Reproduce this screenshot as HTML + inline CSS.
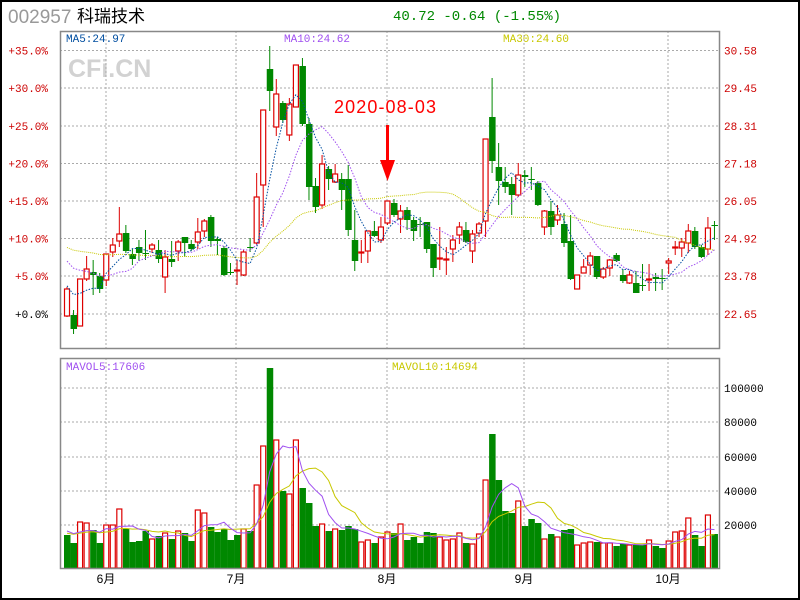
<!DOCTYPE html>
<html><head><meta charset="utf-8"><style>
html,body{margin:0;padding:0;background:#fff;}
#w{position:relative;width:796px;height:596px;border:2px solid #000;overflow:hidden;background:#fff;}
svg{position:absolute;left:-2px;top:-2px;}
</style></head><body><div id="w">
<svg id="s" width="800" height="600" xmlns="http://www.w3.org/2000/svg" font-family="Liberation Mono, monospace">
<text x="8" y="23" font-family="Liberation Sans, sans-serif" font-size="19" fill="#999">002957</text>
<text x="77" y="22" font-family="Liberation Sans, 'Noto Sans CJK SC', sans-serif" font-size="17" fill="#000">科瑞技术</text>
<text x="393" y="20" font-size="14" fill="#080">40.72 -0.64 (-1.55%)</text>
<text x="68" y="77" font-family="Liberation Sans, sans-serif" font-weight="bold" font-size="25" fill="#d2d2d2">CFi.CN</text>
<text x="66" y="42" font-size="11" fill="#004ea0">MA5:24.97</text>
<text x="284" y="42" font-size="11" fill="#a050f0">MA10:24.62</text>
<text x="503" y="42" font-size="11" fill="#c8c800">MA30:24.60</text>
<text x="66" y="370" font-size="11" fill="#a050f0">MAVOL5:17606</text>
<text x="392" y="370" font-size="11" fill="#c8c800">MAVOL10:14694</text>
<g id="g"></g>
<text x="334" y="113" font-family="Liberation Sans, sans-serif" font-size="18" fill="#f00" textLength="102">2020-08-03</text>
<rect x="386" y="125" width="3" height="40" fill="#f00"/>
<polygon points="380,160 395,160 387.5,181" fill="#f00"/>
</svg></div>
<script>
var g=document.getElementById('g'),h='';
function L(x1,y1,x2,y2,c,d){h+='<line x1="'+x1+'" y1="'+y1+'" x2="'+x2+'" y2="'+y2+'" stroke="'+c+'" stroke-width="1"'+(d?' stroke-dasharray="'+d+'"':'')+'/>';}
function T(x,y,t,c,a){h+='<text x="'+x+'" y="'+y+'" font-size="11" fill="'+c+'"'+(a?' text-anchor="'+a+'"':'')+'>'+t+'</text>';}
var gy=[50.5,88,126,163.5,201,238.5,276,314],pl=['30.58','29.45','28.31','27.18','26.05','24.92','23.78','22.65'],pc=['+35.0%','+30.0%','+25.0%','+20.0%','+15.0%','+10.0%','+5.0%','+0.0%'];
gy.forEach(function(y,i){L(60,y,720,y,'#aaa','2,2');T(724,y+4,pl[i],'#c00');T(48,y+4,pc[i],i==7?'#000':'#c00','end');});
var vx=[106,236,387,524,668];vx.forEach(function(x){L(x,31,x,348,'#aaa','2,2');L(x,358,x,568,'#aaa','2,2');});
var vy=[388,422,457,491,525],vl=['100000','80000','60000','40000','20000'];
vy.forEach(function(y,i){L(60,y,720,y,'#aaa','2,2');T(724,y+4,vl[i],'#000');});
var mn=['6月','7月','8月','9月','10月'];vx.forEach(function(x,i){h+='<text x="'+x+'" y="583" font-size="12" text-anchor="middle" font-family="Liberation Sans, \'Noto Sans CJK SC\', sans-serif">'+mn[i]+'</text>';});
var C=[[316,289,287,317],[315,329,310,334],[326,279,279,326],[279,269,256,281],[272,275,260,295],[276,289,273,293],[280,254,254,286],[252,245,238,257],[241,234,207,247],[233,251,225,253],
[254,259,249,265],[247,253,240,261],[253,254,230,260],[249,245,243,253],[250,259,240,263],[277,257,250,293],[259,262,241,267],[251,242,240,261],[237,243,237,257],[244,249,240,251],
[242,232,218,249],[231,221,219,237],[217,241,215,247],[239,241,237,255],[248,275,246,276],[272,273,263,275],[270.5,270,260,285],[275,252,250,276],[247,247.5,238,252],[243,197,173,245],
[185,110,110,227],[69,91,46,111],[127,94,79,136],[103,120,101,123],[135,104,98,141],[107,65,65,107],[66,124,58,126],[124,187,118,200],[186,207,178,213],[205,164,155,209],
[169,179,166,190],[182,174,164,183],[179,190,173,210],[179,230,165,236],[240,261,210,271],[252.5,252,240,263],[251,231,231,263],[231,236,221,237],[240,227,217,243],[223,201,201,225],
[203,215,199,217],[219,211,205,233],[210,220,207,230],[220,231,217,241],[224,224.5,217,237],[222,249,222,253],[244,268,244,277],[258.5,258,227,270],[259.5,259,247,275],[249,240,235,262],
[235,227,222,244],[230,242,222,243],[251,234,230,263],[233,224,222,237],[221,139,139,237],[117,161,78,173],[167,181,143,205],[182,187,167,193],[184,195,177,215],[195,175,163,197],
[175,177,170,187],[179,179.5,167,190],[183,205,181,206],[227,211,210,235],[211,227,201,235],[220,215,205,225],[224,243,213,247],[241,279,215,280],[289,275,275,289],[273,267,259,273],
[265,256,252,275],[256,277,256,279],[277,269,267,279],[268,260,259,276],[255,261,253,262],[275,281,269,283],[283,275,271,284],[283,293,271,293],[285,285.5,264,291],[279.5,279,264,291],
[277,279,273,291],[278,279,269,290],[263,261,258,274],[247.5,247,241,255],[248,242,238,257],[243,231,224,253],[231,247,227,249],[247,257,245,258],[249,228,217,255],[225,225.5,221,240]];
var V=[[535,0],[543,0],[522,1],[523,1],[530,0],[543,0],[525,1],[525,1],[509,1],[529,0],[542,0],[541,0],[531,0],[539,1],[536,0],[533,1],[539,0],[531,1],[533,0],[541,0],
[510,1],[513,1],[527,0],[532,0],[529,0],[540,0],[535,0],[529,1],[531,0],[485,1],[446,1],[368,0],[440,1],[491,0],[494,1],[440,1],[488,0],[503,0],[526,0],[524,1],
[531,0],[529,1],[530,0],[526,0],[529,0],[542,1],[540,1],[543,0],[537,1],[532,1],[533,0],
[524,1],[540,0],[537,0],[543,0],[532,0],[533,0],[537,1],[540,1],[539,1],[533,1],[543,0],[544,1],[534,1],[480,1],[434,0],[480,0],[511,0],[513,0],[501,1],[526,0],
[519,0],[523,0],[539,1],[534,0],[537,1],[530,0],[529,0],[545,1],[543,1],[542,1],[542,0],[543,1],[543,1],[546,0],[544,0],[545,1],[545,0],[545,0],[540,1],[546,0],
[548,0],[541,1],[532,1],[531,1],[518,1],[535,0],[546,0],[515,1],[534,0]];
var n=C.length,X=function(i){return 67+i*6.54;};
C.forEach(function(c,i){var x=X(i),o=c[0],cl=c[1],up=cl<o||(i==26||i==45||i==57||i==58||i==89||i==93);
var col=up?'#d00':'#080',t=Math.min(o,cl),b=Math.max(o,cl);if(b-t<1)b=t+1;
L(x,c[2],x,t,col);L(x,b,x,c[3],col);
if(up)h+='<rect x="'+(x-2.5)+'" y="'+t+'" width="5" height="'+(b-t)+'" fill="#fff" stroke="'+col+'" stroke-width="1.2"/>';
else h+='<rect x="'+(x-3)+'" y="'+t+'" width="6.5" height="'+(b-t)+'" fill="'+col+'"/>';});
V.forEach(function(v,i){var x=X(i),col=v[1]?'#d00':'#080';
if(v[1])h+='<rect x="'+(x-2.5)+'" y="'+v[0]+'" width="5" height="'+(568-v[0])+'" fill="#fff" stroke="'+col+'" stroke-width="1.2"/>';
else h+='<rect x="'+(x-3)+'" y="'+v[0]+'" width="6.5" height="'+(568-v[0])+'" fill="'+col+'"/>';});
var cl=C.map(function(c){return c[1]}),vv=V.map(function(v){return v[0]});
var ma30=[];for(var i=0;i<n;i++){var s=0,m=0;for(var j=i-29;j<=i;j++){s+=(j<0?246:cl[j]);m++;}ma30.push(X(i).toFixed(1)+','+(s/m).toFixed(1));}
var ma10=[];for(var i=0;i<n;i++){var s=0;for(var j=i-9;j<=i;j++){s+=(j<0?258:cl[j]);}ma10.push(X(i).toFixed(1)+','+(s/10).toFixed(1));}
var ma5=[];for(var i=0;i<n;i++){var s=0;for(var j=i-4;j<=i;j++){s+=(j<0?285:cl[j]);}ma5.push(X(i).toFixed(1)+','+(s/5).toFixed(1));}
h+='<polyline points="'+ma30.join(' ')+'" fill="none" stroke="#c8c800" stroke-width="1" stroke-dasharray="1,1"/>';
h+='<polyline points="'+ma10.join(' ')+'" fill="none" stroke="#a050f0" stroke-width="1" stroke-dasharray="1.5,1.5"/>';
h+='<polyline points="'+ma5.join(' ')+'" fill="none" stroke="#004ea0" stroke-width="1" stroke-dasharray="1.5,1.5"/>';
var mv5=[],mv10=[];for(var i=0;i<n;i++){var s=0;for(var j=i-4;j<=i;j++)s+=(j<0?530:vv[j]);mv5.push(X(i).toFixed(1)+','+(s/5).toFixed(1));
s=0;for(var j=i-9;j<=i;j++)s+=(j<0?533:vv[j]);mv10.push(X(i).toFixed(1)+','+(s/10).toFixed(1));}
h+='<polyline points="'+mv10.join(' ')+'" fill="none" stroke="#c8c800" stroke-width="1"/>';
h+='<polyline points="'+mv5.join(' ')+'" fill="none" stroke="#a050f0" stroke-width="1"/>';
h+='<rect x="60.5" y="31.5" width="659" height="317" fill="none" stroke="#888" stroke-width="1.5"/>';
h+='<rect x="60.5" y="358.5" width="659" height="210" fill="none" stroke="#888" stroke-width="1.5"/>';
g.innerHTML=h;
</script></body></html>
